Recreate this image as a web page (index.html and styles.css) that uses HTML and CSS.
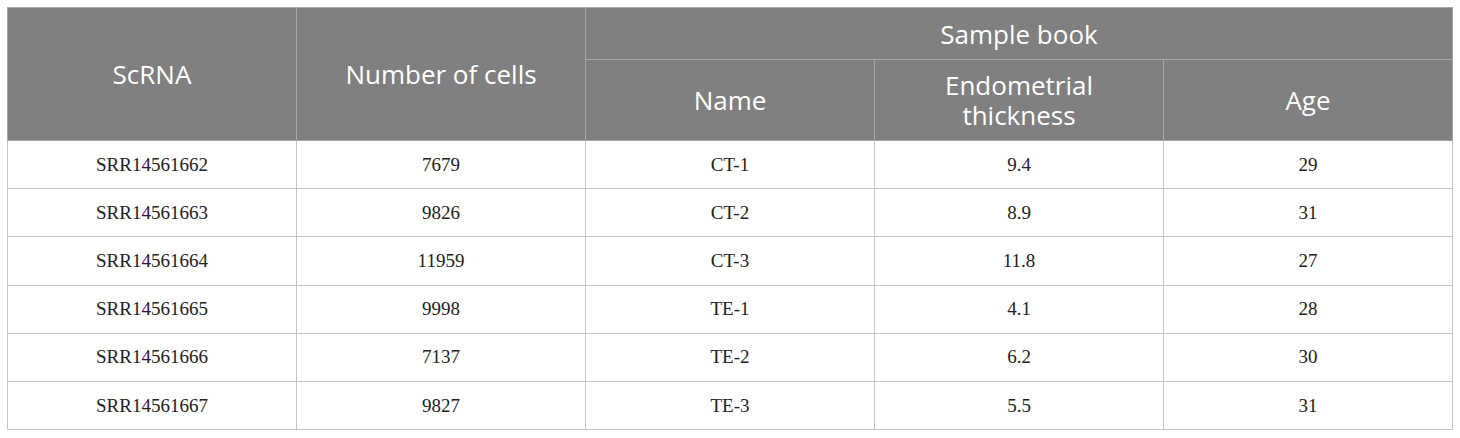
FILE: index.html
```html
<!DOCTYPE html>
<html lang="en">
<head>
<meta charset="utf-8">
<title>Sample table</title>
<link rel="stylesheet" href="styles.css">
</head>
<body>
<table class="data-table">
  <colgroup>
    <col class="col"><col class="col"><col class="col"><col class="col"><col class="col">
  </colgroup>
  <thead>
    <tr class="head-row-1">
      <th rowspan="2">ScRNA</th>
      <th rowspan="2">Number of cells</th>
      <th colspan="3">Sample book</th>
    </tr>
    <tr class="head-row-2">
      <th>Name</th>
      <th>Endometrial<br>thickness</th>
      <th>Age</th>
    </tr>
  </thead>
  <tbody>
    <tr><td>SRR14561662</td><td>7679</td><td>CT-1</td><td>9.4</td><td>29</td></tr>
    <tr><td>SRR14561663</td><td>9826</td><td>CT-2</td><td>8.9</td><td>31</td></tr>
    <tr><td>SRR14561664</td><td>11959</td><td>CT-3</td><td>11.8</td><td>27</td></tr>
    <tr><td>SRR14561665</td><td>9998</td><td>TE-1</td><td>4.1</td><td>28</td></tr>
    <tr><td>SRR14561666</td><td>7137</td><td>TE-2</td><td>6.2</td><td>30</td></tr>
    <tr><td>SRR14561667</td><td>9827</td><td>TE-3</td><td>5.5</td><td>31</td></tr>
  </tbody>
</table>
</body>
</html>
```

FILE: styles.css
```css
html, body {
  margin: 0;
  background: #ffffff;
}
body {
  padding: 7px;
}
.data-table {
  width: 1446px;
  table-layout: fixed;
  border-collapse: collapse;
  border: 1px solid #c4c4c4;
}
.data-table th {
  background: #808080;
  color: #ffffff;
  font-family: "Open Sans", "Noto Sans", sans-serif;
  font-weight: 400;
  font-size: 26px;
  line-height: 30px;
  text-align: center;
  vertical-align: middle;
  padding: 0 8px;
  border: 1px solid #a6a6a6;
}
.head-row-1 {
  height: 52px;
}
.head-row-2 {
  height: 81px;
}
.data-table td {
  height: 47.2px;
  padding: 0 8px;
  font-family: "Liberation Serif", "Times New Roman", serif;
  font-size: 19px;
  color: #222222;
  text-align: center;
  vertical-align: middle;
  border: 1px solid #c4c4c4;
}
```
